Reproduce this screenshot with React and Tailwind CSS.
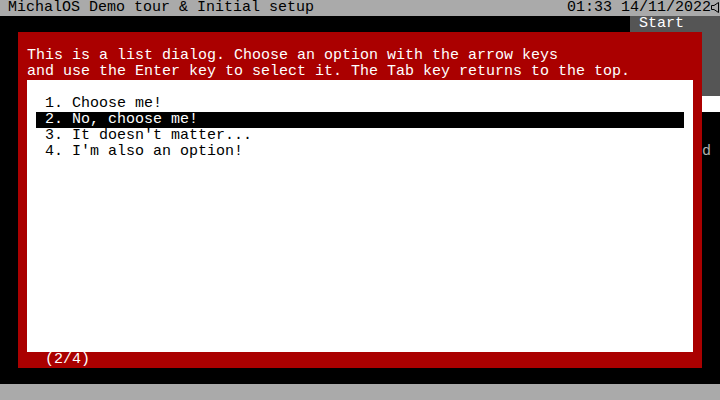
export default function App() {
  const items = ["1. Choose me!", "2. No, choose me!", "3. It doesn't matter...", "4. I'm also an option!"];
  return (
    <div
      className="w-[720px] h-[400px] bg-black overflow-hidden flex flex-col text-[15px] leading-[16px] whitespace-pre"
      style={{ fontFamily: '"Liberation Mono", "DejaVu Sans Mono", monospace' }}
    >
      {/* Top bar */}
      <div className="h-[16px] bg-[#aaaaaa] text-black flex justify-between">
        <span className="pl-[8px]">MichalOS Demo tour &amp; Initial setup</span>
        <div className="flex">
          <span>01:33 14/11/2022</span>
          <svg width="9" height="16" viewBox="0 0 9 16" className="block">
            <path d="M0.5 5.5 H3 L7.5 2.5 V12.5 L3 9.5 H0.5 Z" fill="none" stroke="#000" strokeWidth="1" />
          </svg>
        </div>
      </div>
      {/* Row 1 */}
      <div className="h-[16px] flex justify-end">
        <div className="w-[90px] bg-[#555555] text-white pl-[9px]">Start</div>
      </div>
      {/* Middle */}
      <div className="h-[336px] flex">
        <div className="w-[18px]" />
        <div className="w-[684px] bg-[#aa0000] flex flex-col">
          <div className="h-[16px]" />
          <div className="pl-[9px] text-white">
            <div>This is a list dialog. Choose an option with the arrow keys</div>
            <div>and use the Enter key to select it. The Tab key returns to the top.</div>
          </div>
          <div className="mx-[9px] h-[272px] bg-white pt-[16px]">
            {items.map((t, i) => (
              <div
                key={i}
                className={
                  i === 1
                    ? "mx-[9px] h-[16px] pl-[9px] bg-black text-white"
                    : "mx-[9px] h-[16px] pl-[9px] text-black"
                }
              >
                {t}
              </div>
            ))}
          </div>
          <div className="pl-[27px] text-white">(2/4)</div>
        </div>
        <div className="w-[18px] flex flex-col">
          <div className="h-[64px] bg-[#555555]" />
          <div className="h-[16px] bg-white" />
          <div className="h-[32px]" />
          <div className="text-[#b0b0b0]">d</div>
        </div>
      </div>
      <div className="h-[16px]" />
      <div className="h-[16px] bg-[#aaaaaa]" />
    </div>
  );
}
